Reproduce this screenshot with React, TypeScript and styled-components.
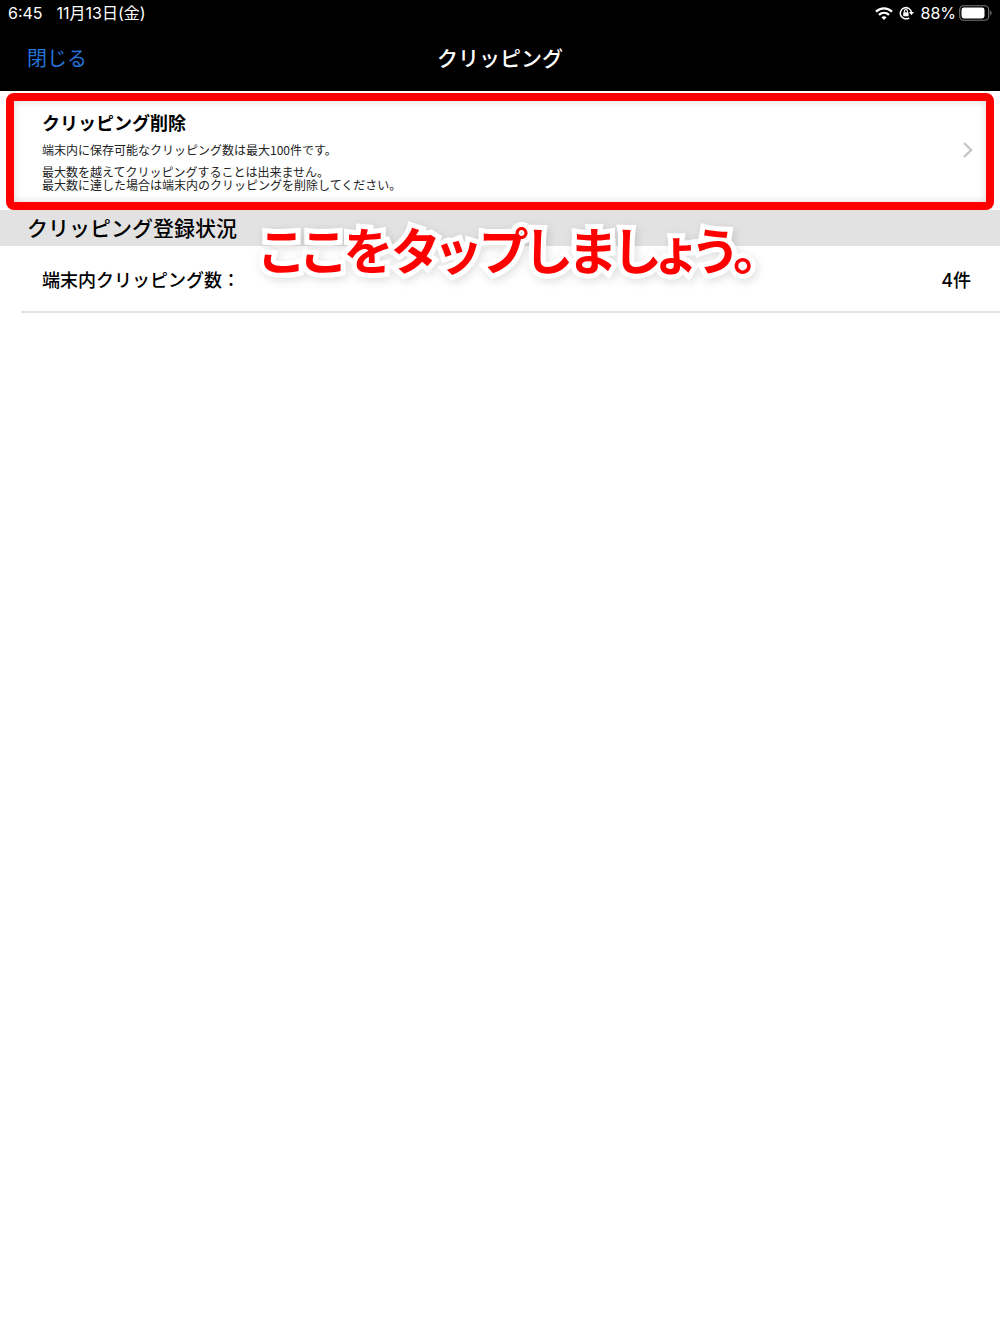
import React from "react";
import styled, { createGlobalStyle } from "styled-components";

const GlobalStyle = createGlobalStyle`
  *, *::before, *::after { box-sizing: border-box; }
  body {
    margin: 0;
    background: #fff;
    color: #000;
    font-family: "Inter", "Noto Sans CJK JP", sans-serif;
  }
  h1, h2, p, dl, dt, dd { margin: 0; }
`;

const Screen = styled.div`
  min-height: 100vh;
  background: #fff;
`;

const TopArea = styled.header`
  background: #000;
  color: #fff;
`;

const StatusBar = styled.div`
  display: flex;
  align-items: center;
  justify-content: space-between;
  height: 26px;
  padding: 0 7px 0 8px;
  font-size: 16px;
  line-height: 26px;
`;

const StatusGroup = styled.div<{ $gap: number }>`
  display: flex;
  align-items: center;
  gap: ${(p) => p.$gap}px;

  svg { display: block; }
`;

const NavBar = styled.div`
  display: grid;
  grid-template-columns: 1fr auto 1fr;
  align-items: center;
  height: 65px;
  padding: 0 27px;
`;

const CloseButton = styled.button`
  justify-self: start;
  padding: 0;
  border: 0;
  background: none;
  color: #2473d8;
  font-family: inherit;
  font-size: 20px;
  line-height: 30px;
`;

const NavTitle = styled.h1`
  font-size: 21px;
  line-height: 30px;
  font-weight: 500;
`;

const DeleteRow = styled.button`
  position: relative;
  display: flex;
  align-items: center;
  justify-content: space-between;
  width: 100%;
  height: 119px;
  padding: 0 27px 1px 42px;
  border: 0;
  background: #fff;
  color: #000;
  font-family: inherit;
  text-align: left;
`;

const HighlightFrame = styled.span`
  position: absolute;
  inset: 2px 6px 0;
  border: 8px solid #f00;
  border-radius: 8px;
  box-shadow: inset 0 0 8px rgba(0, 0, 0, 0.14);
  pointer-events: none;
`;

const RowBody = styled.span`
  display: flex;
  flex-direction: column;
`;

const RowTitle = styled.span`
  font-size: 18px;
  line-height: 28px;
  font-weight: 700;
`;

const RowNote = styled.span`
  margin-top: 5px;
  color: #222;
  font-family: "Noto Sans CJK JP", sans-serif;
  font-size: 12px;
  line-height: 13px;
`;

const NoteGap = styled.span`
  display: block;
  height: 9px;
`;

const SectionHeader = styled.div`
  position: relative;
  height: 36px;
  padding: 1px 27px 0;
  background: #e2e2e2;
`;

const SectionTitle = styled.h2`
  font-size: 21px;
  line-height: 36px;
  font-weight: 500;
`;

const Callout = styled.p`
  position: absolute;
  z-index: 1;
  top: 4px;
  left: 260px;
  color: #f00;
  font-family: "Noto Sans CJK JP", sans-serif;
  font-size: 50px;
  line-height: 68px;
  font-weight: 700;
  font-feature-settings: "palt";
  white-space: nowrap;
  paint-order: stroke fill;
  -webkit-text-stroke: 10px #fff;
  stroke-linejoin: round;
  filter: drop-shadow(2px 3px 4px rgba(0, 0, 0, 0.12));
`;

const CountRow = styled.dl`
  display: flex;
  align-items: center;
  justify-content: space-between;
  height: 67px;
  margin-left: 21px;
  padding: 4px 29px 0 21px;
  border-bottom: 2px solid #e2e2e2;
  font-size: 18px;
  line-height: 28px;
  font-weight: 500;
`;

const WifiIcon = () => (
  <svg width="18" height="13" viewBox="0 0 18 13" fill="none" stroke="#fff" strokeWidth="2.3" aria-hidden="true">
    <path d="M1 4.6C5.6.3 12.4.3 17 4.6" />
    <path d="M4 7.8c2.9-2.6 7.1-2.6 10 0" />
    <path d="M9 13 6.4 10.3c1.5-1.3 3.7-1.3 5.2 0Z" fill="#fff" stroke="none" />
  </svg>
);

const RotationLockIcon = () => (
  <svg width="15" height="14" viewBox="0 0 15 14" fill="none" stroke="#fff" aria-hidden="true">
    <path d="M10.2 11.8A5.6 5.6 0 1 1 12.4 6" strokeWidth="1.5" />
    <path d="M10 6h5l-2.5 3.2Z" fill="#fff" stroke="none" />
    <rect x="4.2" y="6.2" width="5.4" height="4" rx=".6" fill="#fff" stroke="none" />
    <path d="M5.4 6.4V5.1a1.5 1.5 0 0 1 3 0v1.3" strokeWidth="1.1" />
  </svg>
);

const BatteryIcon = () => (
  <svg width="34" height="16" viewBox="0 0 34 16" fill="none" aria-hidden="true">
    <rect x="0.7" y="0.7" width="29" height="14.6" rx="4" stroke="#777" strokeWidth="1.1" />
    <rect x="2.5" y="2.5" width="23" height="11" rx="2.4" fill="#fff" />
    <path d="M31.2 5.5c1.8.7 1.8 4.3 0 5Z" fill="#777" />
  </svg>
);

const ChevronIcon = () => (
  <svg width="10" height="16" viewBox="0 0 10 16" fill="none" stroke="#c4c4c7" strokeWidth="2.2" aria-hidden="true">
    <path d="m1 1 7.2 7L1 15" />
  </svg>
);

export default function App() {
  return (
    <Screen lang="ja">
      <GlobalStyle />
      <TopArea>
        <StatusBar>
          <StatusGroup $gap={14}>
            <span>6:45</span>
            <span>11月13日(金)</span>
          </StatusGroup>
          <StatusGroup $gap={6}>
            <WifiIcon />
            <RotationLockIcon />
            <StatusGroup $gap={3}>
              <span>88%</span>
              <BatteryIcon />
            </StatusGroup>
          </StatusGroup>
        </StatusBar>
        <NavBar>
          <CloseButton type="button">閉じる</CloseButton>
          <NavTitle>クリッピング</NavTitle>
        </NavBar>
      </TopArea>
      <main>
        <DeleteRow type="button">
          <RowBody>
            <RowTitle>クリッピング削除</RowTitle>
            <RowNote>
              端末内に保存可能なクリッピング数は最大100件です。
              <NoteGap />
              最大数を越えてクリッピングすることは出来ません。
              <br />
              最大数に達した場合は端末内のクリッピングを削除してください。
            </RowNote>
          </RowBody>
          <ChevronIcon />
          <HighlightFrame />
        </DeleteRow>
        <SectionHeader>
          <SectionTitle>クリッピング登録状況</SectionTitle>
          <Callout>ここをタップしましょう。</Callout>
        </SectionHeader>
        <CountRow>
          <dt>端末内クリッピング数：</dt>
          <dd>4件</dd>
        </CountRow>
      </main>
    </Screen>
  );
}
